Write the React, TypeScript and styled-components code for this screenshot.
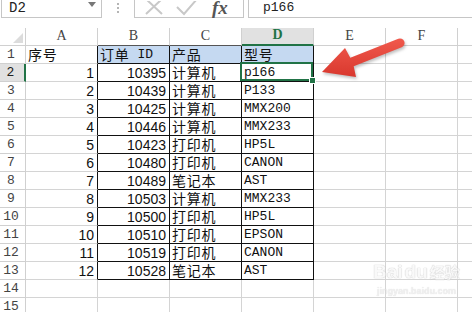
import styled, { createGlobalStyle } from "styled-components";

const GREEN = "#217346";
const GRID = "#d4d4d4";
const HEAD_LINE = "#d0d0d0";

const GlobalStyle = createGlobalStyle`
  html, body {
    margin: 0;
    padding: 0;
    background: #ffffff;
    overflow: hidden;
  }
`;

const Page = styled.div`
  position: relative;
  width: 472px;
  height: 312px;
  overflow: hidden;
  background: #ffffff;
  font-family: "Noto Sans CJK SC", sans-serif;
`;

const FormulaBar = styled.div`
  display: flex;
  align-items: stretch;
  height: 18px;
  margin-bottom: 10px;
`;

const NameBox = styled.div`
  width: 101px;
  margin-left: 1px;
  box-sizing: border-box;
  border: 1px solid #c6c6c6;
  border-top: none;
  display: flex;
  align-items: center;
  justify-content: space-between;
  padding: 0 5px 2px 7px;
  font-family: "Liberation Mono", monospace;
  font-size: 14px;
  color: #222;
`;

const DropArrow = styled.span`
  width: 0;
  height: 0;
  border-left: 4px solid transparent;
  border-right: 4px solid transparent;
  border-top: 5px solid #777;
  margin-bottom: 6px;
`;

const Dots = styled.div`
  width: 32px;
  display: flex;
  flex-direction: column;
  align-items: center;
  justify-content: center;
  gap: 2px;
  padding-bottom: 3px;
  & > i {
    width: 2px;
    height: 2px;
    background: #b5b5b5;
  }
`;

const FuncBox = styled.div`
  width: 110px;
  box-sizing: border-box;
  border: 1px solid #c6c6c6;
  border-top: none;
  display: flex;
  align-items: center;
  gap: 12px;
  padding: 0 0 1px 9px;
`;

const Fx = styled.span`
  font-family: "Liberation Serif", serif;
  font-style: italic;
  font-weight: bold;
  font-size: 19px;
  color: #555;
  line-height: 1;
  margin-top: -1px;
  margin-left: 2px;
`;

const FormulaInput = styled.div`
  flex: 1;
  margin-left: 4px;
  box-sizing: border-box;
  border: 1px solid #c6c6c6;
  border-top: none;
  border-right: none;
  padding: 0 0 2px 14px;
  display: flex;
  align-items: center;
  font-family: "Liberation Mono", monospace;
  font-size: 13px;
  color: #222;
`;

const Sheet = styled.div`
  display: grid;
  grid-template-columns: 26px repeat(7, 72px);
  grid-auto-rows: 18px;
`;

const Corner = styled.div`
  box-sizing: border-box;
  border-right: 1px solid ${HEAD_LINE};
  border-bottom: 1px solid ${HEAD_LINE};
  position: relative;
  &::after {
    content: "";
    position: absolute;
    right: 2px;
    bottom: 2px;
    border-left: 10px solid transparent;
    border-bottom: 10px solid #dcdcdc;
  }
`;

const ColHead = styled.div<{ $active?: boolean; $dark?: boolean }>`
  box-sizing: border-box;
  display: flex;
  align-items: flex-end;
  justify-content: center;
  padding-bottom: 1px;
  border-right: 1px solid ${HEAD_LINE};
  border-bottom: ${(p) =>
    p.$active ? `2px solid ${GREEN}` : `1px solid ${p.$dark ? "#555" : HEAD_LINE}`};
  background: ${(p) => (p.$active ? "#e1e1e1" : "#ffffff")};
  color: ${(p) => (p.$active ? GREEN : "#444")};
  font-weight: ${(p) => (p.$active ? 700 : 400)};
  font-family: "Liberation Serif", serif;
  font-size: 14px;
  line-height: 16px;
`;

const RowHead = styled.div<{ $active?: boolean }>`
  box-sizing: border-box;
  display: flex;
  align-items: flex-end;
  justify-content: center;
  padding-right: 3px;
  border-right: ${(p) => (p.$active ? `2px solid ${GREEN}` : `1px solid ${HEAD_LINE}`)};
  border-bottom: 1px solid ${HEAD_LINE};
  background: ${(p) => (p.$active ? "#e1e1e1" : "#ffffff")};
  color: ${(p) => (p.$active ? "#222" : "#444")};
  font-family: "Liberation Mono", monospace;
  font-size: 13px;
  line-height: 16px;
`;

type CellFont = "cjk" | "num" | "mono";

const fonts: Record<CellFont, string> = {
  cjk: `font-family: "Noto Sans CJK SC", sans-serif; font-size: 14px; letter-spacing: 0.7px; line-height: 16px; align-items: center; padding-bottom: 1px;`,
  num: `font-family: "Liberation Sans", sans-serif; font-size: 14px; line-height: 16px; align-items: flex-end;`,
  mono: `font-family: "Liberation Mono", monospace; font-size: 13px; line-height: 16px; align-items: flex-end;`,
};

const Cell = styled.div<{
  $align?: "left" | "right";
  $fill?: boolean;
  $darkRight?: boolean;
  $darkBottom?: boolean;
  $font?: CellFont;
  $selected?: boolean;
}>`
  position: relative;
  box-sizing: border-box;
  display: flex;
  justify-content: ${(p) => (p.$align === "right" ? "flex-end" : "flex-start")};
  padding: 0 3px 0 2px;
  border-right: 1px solid ${(p) => (p.$darkRight ? "#111" : GRID)};
  border-bottom: 1px solid ${(p) => (p.$darkBottom ? "#111" : GRID)};
  background: ${(p) => (p.$fill ? "#c5d9f1" : "transparent")};
  color: #111;
  white-space: nowrap;
  ${(p) => fonts[p.$font ?? "cjk"]}
  ${(p) =>
    p.$selected &&
    `
    &::after {
      content: "";
      position: absolute;
      left: -2px;
      top: -2px;
      right: 0;
      bottom: 0;
      border: 2px solid ${GREEN};
    }
  `}
`;

const Latin = styled.span`
  font-family: "Liberation Mono", monospace;
  font-size: 13px;
  letter-spacing: 0;
  margin-left: 8px;
  padding-top: 1px;
`;

const FillHandle = styled.span`
  position: absolute;
  right: -3px;
  bottom: -3px;
  width: 5px;
  height: 5px;
  background: ${GREEN};
  border: 1px solid #fff;
  z-index: 2;
`;

const ArrowLayer = styled.svg`
  position: absolute;
  left: 0;
  top: 0;
  pointer-events: none;
  filter: drop-shadow(1px 2px 1.5px rgba(0, 0, 0, 0.25));
`;

const Watermark = styled.div`
  position: absolute;
  left: 373px;
  top: 262px;
  display: flex;
  flex-direction: column;
  align-items: center;
  pointer-events: none;
  opacity: 0.6;
`;

const MarkLogo = styled.div`
  display: flex;
  align-items: center;
  gap: 2px;
  font-family: "Liberation Sans", sans-serif;
  font-weight: 700;
  font-size: 19px;
  line-height: 20px;
  color: #f6f6f6;
  text-shadow: 0 0 1px #a8a8a8, 0 0 1px #a8a8a8;
  & > em {
    font-style: normal;
    font-family: "Noto Sans CJK SC", sans-serif;
    font-size: 15px;
  }
`;

const MarkUrl = styled.div`
  margin-top: 4px;
  font-family: "Liberation Sans", sans-serif;
  font-size: 9px;
  font-weight: 700;
  color: #e6e6e6;
  text-shadow: 0 0 1px #c0c0c0;
`;

const rows: [number, number, string, string][] = [
  [1, 10395, "计算机", "p166"],
  [2, 10439, "计算机", "P133"],
  [3, 10425, "计算机", "MMX200"],
  [4, 10446, "计算机", "MMX233"],
  [5, 10423, "打印机", "HP5L"],
  [6, 10480, "打印机", "CANON"],
  [7, 10489, "笔记本", "AST"],
  [8, 10503, "计算机", "MMX233"],
  [9, 10500, "打印机", "HP5L"],
  [10, 10510, "打印机", "EPSON"],
  [11, 10519, "打印机", "CANON"],
  [12, 10528, "笔记本", "AST"],
];

const letters = ["A", "B", "C", "D", "E", "F", ""];

const CloseIcon = () => (
  <svg width="20" height="15" viewBox="0 0 20 15">
    <path d="M2 -2 L18 13 M18 -2 L2 13" stroke="#c8c8c8" strokeWidth="2" fill="none" />
  </svg>
);

const CheckIcon = () => (
  <svg width="22" height="15" viewBox="0 0 22 15">
    <path d="M1 6 L8 13 L21 -2" stroke="#c8c8c8" strokeWidth="2" fill="none" />
  </svg>
);

const EmptyRow = ({ n }: { n: number }) => (
  <>
    <RowHead>{n}</RowHead>
    {letters.map((l, i) => (
      <Cell key={i} />
    ))}
  </>
);

export default function App() {
  return (
    <Page>
      <GlobalStyle />
      <FormulaBar>
        <NameBox>
          <span>D2</span>
          <DropArrow />
        </NameBox>
        <Dots>
          <i />
          <i />
          <i />
        </Dots>
        <FuncBox>
          <CloseIcon />
          <CheckIcon />
          <Fx>fx</Fx>
        </FuncBox>
        <FormulaInput>p166</FormulaInput>
      </FormulaBar>

      <Sheet>
        <Corner />
        {letters.map((l, i) => (
          <ColHead key={l + i} $active={l === "D"} $dark={l === "B" || l === "C"}>
            {l}
          </ColHead>
        ))}

        <RowHead>1</RowHead>
        <Cell $darkRight>序号</Cell>
        <Cell $fill $darkRight $darkBottom>
          订单<Latin>ID</Latin>
        </Cell>
        <Cell $fill $darkRight $darkBottom>
          产品
        </Cell>
        <Cell $fill $darkRight $darkBottom>
          型号
        </Cell>
        <Cell />
        <Cell />
        <Cell />

        {rows.map(([no, id, product, model], r) => (
          <>
            <RowHead key={`h${no}`} $active={r === 0}>
              {r + 2}
            </RowHead>
            <Cell key={`a${no}`} $align="right" $font="num" $darkRight>
              {no}
            </Cell>
            <Cell key={`b${no}`} $align="right" $font="num" $darkRight $darkBottom>
              {id}
            </Cell>
            <Cell key={`c${no}`} $darkRight $darkBottom>
              {product}
            </Cell>
            <Cell key={`d${no}`} $font="mono" $darkRight $darkBottom $selected={r === 0}>
              {model}
              {r === 0 && <FillHandle />}
            </Cell>
            <Cell key={`e${no}`} />
            <Cell key={`f${no}`} />
            <Cell key={`g${no}`} />
          </>
        ))}

        <EmptyRow n={14} />
        <EmptyRow n={15} />
      </Sheet>

      <ArrowLayer width="472" height="312" viewBox="0 0 472 312">
        <defs>
          <linearGradient id="arrowFill" x1="0" y1="0" x2="0" y2="1">
            <stop offset="0" stopColor="#f0594c" />
            <stop offset="1" stopColor="#d9382e" />
          </linearGradient>
        </defs>
        <path
          d="M322 72 L345 48 L350.3 57.8 L398.3 38.8 A4.5 4.5 0 0 1 401.7 47.2 L353.7 66.2 L356 77 Z"
          fill="url(#arrowFill)"
        />
      </ArrowLayer>

      <Watermark>
        <MarkLogo>
          <span>Bai</span>
          <span>du</span>
          <em>经验</em>
        </MarkLogo>
        <MarkUrl>jingyan.baidu.com</MarkUrl>
      </Watermark>
    </Page>
  );
}
